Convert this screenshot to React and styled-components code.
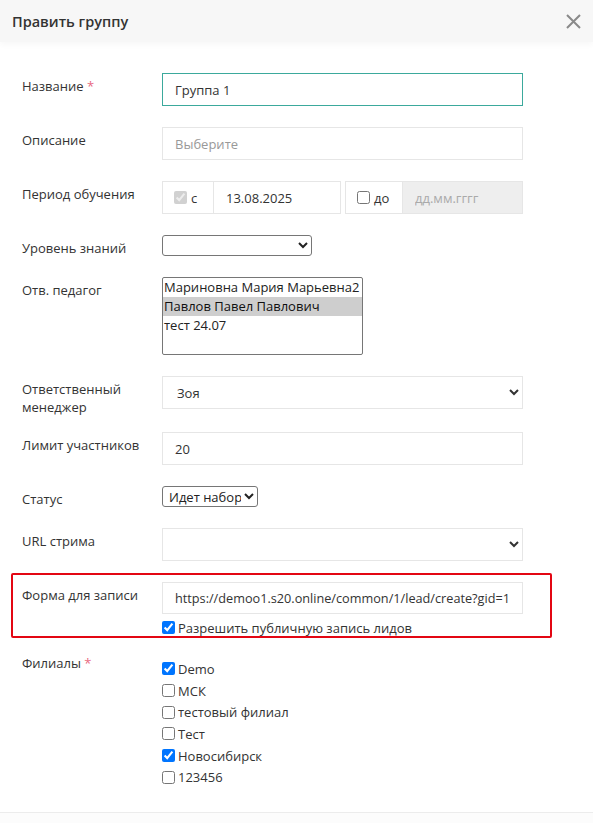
import styled, { createGlobalStyle } from "styled-components";

const GlobalStyle = createGlobalStyle`
  body {
    margin: 0;
    background: #fff;
    font-family: "Open Sans", "Liberation Sans", sans-serif;
    color: #333;
  }
`;

const teachers = ["Мариновна Мария Марьевна2", "Павлов Павел Павлович", "тест 24.07"];

const branches = [
  { name: "Demo", checked: true },
  { name: "МСК", checked: false },
  { name: "тестовый филиал", checked: false },
  { name: "Тест", checked: false },
  { name: "Новосибирск", checked: true },
  { name: "123456", checked: false },
];

const CloseIcon = () => (
  <svg width="15" height="15" viewBox="0 0 15 15">
    <path d="M1 1L14 14M14 1L1 14" stroke="#8a8a8a" strokeWidth="2" fill="none" />
  </svg>
);

const App = () => {
  return (
    <>
      <GlobalStyle />
      <Modal>
        <Header>
          <Title>Править группу</Title>
          <CloseButton>
            <CloseIcon />
          </CloseButton>
        </Header>

        <Body>
          <Row>
            <Label>
              Название <Required>*</Required>
            </Label>
            <TextInput defaultValue="Группа 1" $focused />
          </Row>

          <Row>
            <Label>Описание</Label>
            <TextInput placeholder="Выберите" />
          </Row>

          <Row>
            <Label>Период обучения</Label>
            <Period>
              <Addon $width={52}>
                <Check type="checkbox" checked disabled readOnly />
                <span>с</span>
              </Addon>
              <DateInput $width={127} defaultValue="13.08.2025" />
              <Addon $width={58} $gap>
                <Check type="checkbox" />
                <span>до</span>
              </Addon>
              <DateInput $width={120} placeholder="дд.мм.гггг" disabled $disabled />
            </Period>
          </Row>

          <Row>
            <Label>Уровень знаний</Label>
            <NativeSelect $width={150}>
              <option></option>
            </NativeSelect>
          </Row>

          <Row>
            <Label>Отв. педагог</Label>
            <ListBox multiple size={4} defaultValue={["Павлов Павел Павлович"]}>
              {teachers.map((t) => (
                <option key={t} value={t}>
                  {t}
                </option>
              ))}
            </ListBox>
          </Row>

          <Row>
            <Label>Ответственный менеджер</Label>
            <FieldSelect defaultValue="zoya">
              <option value="zoya">Зоя</option>
            </FieldSelect>
          </Row>

          <Row>
            <Label>Лимит участников</Label>
            <TextInput defaultValue="20" />
          </Row>

          <Row>
            <Label>Статус</Label>
            <NativeSelect $width={96}>
              <option>Идет набор</option>
            </NativeSelect>
          </Row>

          <Row>
            <Label>URL стрима</Label>
            <FieldSelect>
              <option></option>
            </FieldSelect>
          </Row>

          <Row $highlighted>
            <Label>Форма для записи</Label>
            <Stack>
              <TextInput
                $height={32}
                $size={12.7}
                defaultValue="https://demoo1.s20.online/common/1/lead/create?gid=1"
              />
              <CheckLine $top={3}>
                <Check type="checkbox" defaultChecked />
                Разрешить публичную запись лидов
              </CheckLine>
            </Stack>
          </Row>

          <Row $top={12}>
            <Label>
              Филиалы <Required>*</Required>
            </Label>
            <CheckList>
              {branches.map((b) => (
                <CheckLine key={b.name}>
                  <Check type="checkbox" defaultChecked={b.checked} />
                  {b.name}
                </CheckLine>
              ))}
            </CheckList>
          </Row>
        </Body>

        <Footer />
      </Modal>
    </>
  );
};

const Modal = styled.div`
  width: 593px;
  height: 823px;
  background: #fff;
  display: flex;
  flex-direction: column;
  overflow: hidden;
`;

const Header = styled.div`
  height: 42px;
  flex-shrink: 0;
  display: flex;
  align-items: center;
  justify-content: space-between;
  padding: 0 12px 0 12px;
  background: #f7f7f7;
  box-shadow: 0 3px 6px rgba(0, 0, 0, 0.03);
`;

const Title = styled.h2`
  margin: 0;
  font-size: 14.5px;
  font-weight: 600;
  color: #333;
`;

const CloseButton = styled.button`
  border: 0;
  background: none;
  padding: 0;
  width: 16px;
  height: 16px;
  display: flex;
  align-items: center;
  justify-content: center;
  cursor: pointer;
`;

const Body = styled.div`
  flex: 1;
  padding: 31px 0 0 22px;
`;

const Row = styled.div`
  display: grid;
  grid-template-columns: 140px 361px;
  align-items: start;
  margin-top: ${(p) => (p.$top != null ? p.$top : 21)}px;

  &:first-child {
    margin-top: 0;
  }

  ${(p) =>
    p.$highlighted &&
    `
    margin: 12px 0 0 -11px;
    width: 541px;
    box-sizing: border-box;
    padding: 7px 0 0 9px;
    height: 65px;
    border: 2px solid #e30613;
    border-radius: 2px;
  `}
`;

const Label = styled.label`
  font-size: 13px;
  line-height: 18px;
  padding: 4px 10px 0 0;
  margin-bottom: -5px;
  color: #333;
`;

const Required = styled.span`
  color: #e86a7f;
`;

const TextInput = styled.input`
  box-sizing: border-box;
  width: 100%;
  height: ${(p) => p.$height || 33}px;
  border: 1px solid ${(p) => (p.$focused ? "#3ba99c" : "#e6e6e6")};
  padding: 0 12px;
  font-family: "Open Sans", "Liberation Sans", sans-serif;
  font-size: ${(p) => p.$size || 13}px;
  color: #333;
  background: #fff;
  outline: none;

  &::placeholder {
    color: #999;
  }
`;

const Period = styled.div`
  display: flex;
  height: 33px;
`;

const Addon = styled.div`
  box-sizing: border-box;
  width: ${(p) => p.$width}px;
  margin-left: ${(p) => (p.$gap ? 4 : 0)}px;
  flex-shrink: 0;
  display: flex;
  align-items: center;
  padding-left: 11px;
  border: 1px solid #e6e6e6;
  font-size: 13px;
  color: #333;

  span {
    margin-left: 1px;
  }
`;

const DateInput = styled.input`
  box-sizing: border-box;
  width: ${(p) => p.$width}px;
  min-width: 0;
  flex: 0 0 auto;
  height: 33px;
  border: 1px solid #e6e6e6;
  border-left: 0;
  padding: 0 12px;
  font-family: "Open Sans", "Liberation Sans", sans-serif;
  font-size: 13px;
  color: #333;
  background: ${(p) => (p.$disabled ? "#eeeeee" : "#fff")};
  outline: none;

  &::placeholder {
    color: #aaa;
  }
`;

const Check = styled.input`
  width: 13px;
  height: 13px;
  margin: 0 3px 0 0;
  accent-color: #0075ff;
  flex-shrink: 0;
`;

const NativeSelect = styled.select`
  width: ${(p) => p.$width}px;
  height: 21px;
  font-family: "Open Sans", "Liberation Sans", sans-serif;
  font-size: 13px;
  color: #222;
  border: 1px solid #767676;
  border-radius: 3px;
  background: #fff;
  padding: 0 0 0 2px;
`;

const ListBox = styled.select`
  width: 201px;
  height: 78px;
  box-sizing: border-box;
  font-family: "Open Sans", "Liberation Sans", sans-serif;
  font-size: 13px;
  color: #222;
  border: 1px solid #767676;
  border-radius: 2px;
  padding: 0;
  outline: none;
  overflow: hidden;

  option {
    padding: 0 1px;
    line-height: 19px;
    height: 19px;
  }
`;

const FieldSelect = styled.select`
  box-sizing: border-box;
  width: 100%;
  height: 33px;
  border: 1px solid #e6e6e6;
  border-radius: 0;
  padding: 0 8px 0 10px;
  font-family: "Open Sans", "Liberation Sans", sans-serif;
  font-size: 13px;
  color: #333;
  background: #fff;
  outline: none;
`;

const Stack = styled.div`
  display: flex;
  flex-direction: column;
`;

const CheckLine = styled.label`
  display: flex;
  align-items: center;
  height: 21.7px;
  margin-top: ${(p) => p.$top || 0}px;
  font-size: 13px;
  color: #333;
`;

const CheckList = styled.div`
  display: flex;
  flex-direction: column;
  padding-top: 8px;
`;

const Footer = styled.div`
  height: 10px;
  flex-shrink: 0;
  border-top: 1px solid #ececec;
  background: #fcfcfc;
`;

export default App;
